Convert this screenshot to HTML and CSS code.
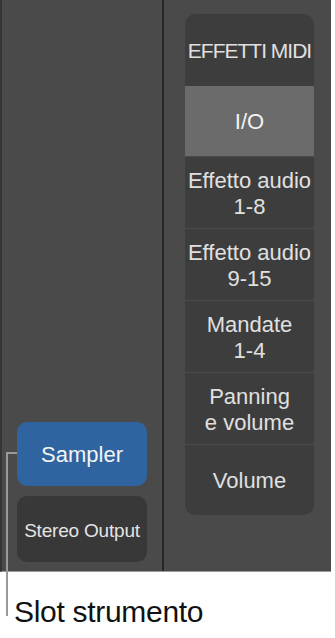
FILE: index.html
```html
<!DOCTYPE html>
<html>
<head>
	<meta charset="utf-8">
	<meta name="viewport" content="width=device-width, initial-scale=1">
	<title>Slot strumento</title>
	<link rel="stylesheet" href="styles.css">
</head>
<body>
	<div class="mixer">
		<div class="strip">
			<div class="slot slot-inst">Sampler</div>
			<div class="slot slot-out">Stereo Output</div>
		</div>
		<div class="divider"></div>
		<div class="side">
			<div class="menu">
				<div class="item item-caps">EFFETTI MIDI</div>
				<div class="item item-on">I/O</div>
				<div class="item">Effetto audio<br>1-8</div>
				<div class="item">Effetto audio<br>9-15</div>
				<div class="item">Mandate<br>1-4</div>
				<div class="item">Panning<br>e volume</div>
				<div class="item item-last">Volume</div>
			</div>
		</div>
	</div>
	<div class="callout">
		<div class="leader"></div>
		<div class="caption">Slot strumento</div>
	</div>
</body>
</html>
```
FILE: styles.css
```css
body {
	margin: 0;
	background: #fff;
	font-family: "Liberation Sans", Arial, sans-serif;
	width: 331px;
	position: relative;
}

.mixer {
	display: flex;
	height: 571px;
	background: #4a4a4a;
	border-bottom: 1px solid #9a9a9a;
	border-left: 2px solid #353535;
	box-sizing: content-box;
}

.strip {
	width: 160px;
	display: flex;
	flex-direction: column;
	justify-content: flex-end;
	padding: 0 0 9px 15px;
	box-sizing: border-box;
	gap: 10px;
}

.slot {
	width: 130px;
	border-radius: 10px;
	display: flex;
	align-items: center;
	justify-content: center;
	color: #e4e4e4;
}

.slot-inst {
	height: 64px;
	background: #2f64a0;
	color: #f4f4f4;
	font-size: 22px;
	padding-top: 2px;
	box-sizing: border-box;
}

.slot-out {
	height: 66px;
	background: #383838;
	font-size: 19px;
	letter-spacing: -0.2px;
	padding-top: 3px;
	box-sizing: border-box;
}

.divider {
	width: 2px;
	background: #262626;
}

.side {
	flex: 1;
	padding: 14px 17px 0 21px;
}

.menu {
	width: 129px;
	background: #3d3d3d;
	border-radius: 10px;
	overflow: hidden;
	display: flex;
	flex-direction: column;
}

.item {
	height: 72px;
	display: flex;
	align-items: center;
	justify-content: center;
	text-align: center;
	font-size: 22px;
	line-height: 26px;
	color: #e0e0e0;
	border-top: 1px solid #4b4b4b;
	padding-top: 2px;
	box-sizing: border-box;
}

.item-caps {
	height: 72px;
	border-top: none;
	font-size: 21px;
	letter-spacing: -1px;
}

.item-on {
	height: 70px;
	border-top: none;
	background: #6b6b6b;
	color: #f2f2f2;
}

.item-last {
	height: 71px;
}

.callout {
	height: 66px;
}

.leader {
	position: absolute;
	left: 6px;
	top: 452px;
	width: 11px;
	height: 164px;
	border-left: 2px solid #9a9a9a;
	border-top: 2px solid #9a9a9a;
	box-sizing: border-box;
}

.caption {
	padding: 24px 0 0 14px;
	font-size: 30px;
	line-height: 32px;
	color: #111;
	letter-spacing: -0.3px;
}
```
